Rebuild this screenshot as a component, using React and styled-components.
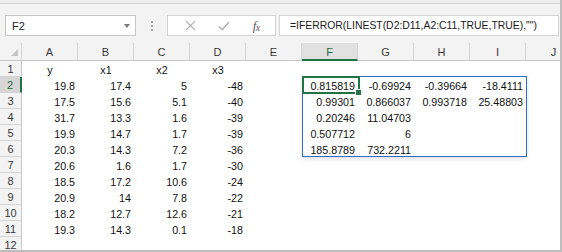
import React from 'react';
import styled, {createGlobalStyle} from 'styled-components';

const GlobalStyle = createGlobalStyle`
    html, body {
        margin: 0;
        padding: 0;
        background: #ffffff;
    }
`;

const COL_W = 56;
const ROW_H = 16;
const HEAD_H = 18;
const ROWHEAD_W = 22;

const columns = ['A', 'B', 'C', 'D', 'E', 'F', 'G', 'H', 'I', 'J'];

const data = [
    ['y', 'x1', 'x2', 'x3'],
    ['19.8', '17.4', '5', '-48', '', '0.815819', '-0.69924', '-0.39664', '-18.4111'],
    ['17.5', '15.6', '5.1', '-40', '', '0.99301', '0.866037', '0.993718', '25.48803'],
    ['31.7', '13.3', '1.6', '-39', '', '0.20246', '11.04703'],
    ['19.9', '14.7', '1.7', '-39', '', '0.507712', '6'],
    ['20.3', '14.3', '7.2', '-36', '', '185.8789', '732.2211'],
    ['20.6', '1.6', '1.7', '-30'],
    ['18.5', '17.2', '10.6', '-24'],
    ['20.9', '14', '7.8', '-22'],
    ['18.2', '12.7', '12.6', '-21'],
    ['19.3', '14.3', '0.1', '-18'],
    [],
];

const Window = styled.div`
    width: 562px;
    height: 252px;
    box-sizing: border-box;
    border-right: 2px solid #bdbdbd;
    border-bottom: 2px solid #bdbdbd;
    display: flex;
    flex-direction: column;
    overflow: hidden;
    font-family: "Liberation Sans", Arial, sans-serif;
    color: #1a1a1a;
`;

const TopStrip = styled.div`
    height: 3px;
    flex: none;
    background: #eeeeee;
    border-bottom: 1px solid #d4d4d4;
`;

const FormulaBar = styled.div`
    height: 39px;
    flex: none;
    background: #f3f3f3;
    display: flex;
    align-items: flex-start;
    padding: 11px 1px 0 5px;
    box-sizing: border-box;
`;

const NameBox = styled.div`
    width: 131px;
    height: 21px;
    box-sizing: border-box;
    background: #ffffff;
    border: 1px solid #c6c6c6;
    display: flex;
    align-items: center;
    justify-content: space-between;
    padding: 0 5px 0 6px;
    font-size: 11px;
    color: #222;
`;

const Caret = styled.span`
    width: 0;
    height: 0;
    border-left: 3.5px solid transparent;
    border-right: 3.5px solid transparent;
    border-top: 4px solid #7a7a7a;
`;

const Grip = styled.div`
    width: 31px;
    height: 21px;
    display: flex;
    flex-direction: column;
    align-items: center;
    justify-content: center;
    gap: 2px;
`;

const GripDot = styled.span`
    width: 2px;
    height: 2px;
    background: #a8a8a8;
`;

const FxButtons = styled.div`
    width: 109px;
    height: 21px;
    box-sizing: border-box;
    background: #ffffff;
    border: 1px solid #d4d4d4;
    display: flex;
    align-items: center;
    justify-content: space-around;
    padding: 0 4px 0 6px;
`;

const FxLabel = styled.span`
    font-family: "Liberation Serif", "Times New Roman", serif;
    font-style: italic;
    font-size: 13px;
    color: #5a5a5a;
    letter-spacing: -0.5px;

    small {
        font-size: 10px;
        position: relative;
        top: 1px;
    }
`;

const FormulaInput = styled.div`
    flex: 1;
    height: 21px;
    margin-left: 3px;
    box-sizing: border-box;
    background: #ffffff;
    border: 1px solid #d4d4d4;
    display: flex;
    align-items: center;
    padding-left: 10px;
    font-size: 10.4px;
    color: #1a1a1a;
    white-space: nowrap;
`;

const Sheet = styled.div`
    flex: 1;
    position: relative;
    display: grid;
    grid-template-columns: ${ROWHEAD_W}px repeat(${columns.length}, ${COL_W}px);
    grid-template-rows: ${HEAD_H}px repeat(${data.length}, ${ROW_H}px);
    background: #ffffff;
    overflow: hidden;
`;

const Corner = styled.div`
    background: #f3f3f3;
    border-right: 1px solid #d4d4d4;
    border-bottom: 1px solid #c8c8c8;
    position: relative;
`;

const CornerMark = styled.span`
    position: absolute;
    right: 3px;
    bottom: 4px;
    width: 0;
    height: 0;
    border-left: 7px solid transparent;
    border-bottom: 7px solid #c3c3c3;
`;

const ColHead = styled.div`
    background: ${(p) => (p.$active ? '#e1e1e1' : '#f3f3f3')};
    border-right: 1px solid #d4d4d4;
    border-bottom: ${(p) => (p.$active ? '2px solid #217346' : '1px solid #c8c8c8')};
    color: ${(p) => (p.$active ? '#1e6b40' : '#3a3a3a')};
    font-size: 11px;
    display: flex;
    align-items: center;
    justify-content: center;
    padding-top: 1px;
    box-sizing: border-box;
`;

const RowHead = styled.div`
    background: ${(p) => (p.$active ? '#d6d6d6' : '#f3f3f3')};
    border-right: ${(p) => (p.$active ? '2px solid #217346' : '1px solid #c8c8c8')};
    border-bottom: 1px solid #d4d4d4;
    color: ${(p) => (p.$active ? '#1e6b40' : '#3a3a3a')};
    font-size: 11px;
    display: flex;
    align-items: center;
    justify-content: center;
    box-sizing: border-box;
`;

const Cell = styled.div`
    font-size: 10.7px;
    line-height: ${ROW_H}px;
    padding: 1px 3px 0;
    white-space: nowrap;
    overflow: visible;
    text-align: ${(p) => (p.$label ? 'center' : 'right')};
    color: #111;
`;

const ResultRange = styled.div`
    position: absolute;
    left: ${ROWHEAD_W + COL_W * 5}px;
    top: ${HEAD_H + ROW_H - 1}px;
    width: ${COL_W * 4 + 1}px;
    height: ${ROW_H * 5 + 1}px;
    box-sizing: border-box;
    border: 1px solid #2f6cc7;
    box-shadow: 0 2px 4px rgba(0, 0, 0, 0.12);
    pointer-events: none;
`;

const ActiveCell = styled.div`
    position: absolute;
    left: ${ROWHEAD_W + COL_W * 5}px;
    top: ${HEAD_H + ROW_H - 1}px;
    width: ${COL_W + 2}px;
    height: ${ROW_H + 2}px;
    box-sizing: border-box;
    border: 2px solid #217346;
    pointer-events: none;
`;

const FillHandle = styled.span`
    position: absolute;
    right: -4px;
    bottom: -4px;
    width: 5px;
    height: 5px;
    background: #217346;
    border: 1px solid #ffffff;
`;

const CrossIcon = () => (
    <svg width='11' height='11' viewBox='0 0 11 11'>
        <path d='M1 1 L10 10 M10 1 L1 10' stroke='#b4b4b4' strokeWidth='1.2' fill='none'/>
    </svg>
);

const CheckIcon = () => (
    <svg width='12' height='10' viewBox='0 0 12 10'>
        <path d='M1 5.5 L4.2 8.5 L11 1' stroke='#b4b4b4' strokeWidth='1.6' fill='none'/>
    </svg>
);

const App = () => {
    return (
        <Window>
            <GlobalStyle/>
            <TopStrip/>
            <FormulaBar>
                <NameBox>
                    <span>{'F2'}</span>
                    <Caret/>
                </NameBox>
                <Grip>
                    <GripDot/>
                    <GripDot/>
                    <GripDot/>
                </Grip>
                <FxButtons>
                    <CrossIcon/>
                    <CheckIcon/>
                    <FxLabel>{'f'}<small>{'x'}</small></FxLabel>
                </FxButtons>
                <FormulaInput>{'=IFERROR(LINEST(D2:D11,A2:C11,TRUE,TRUE),"")'}</FormulaInput>
            </FormulaBar>
            <Sheet>
                <Corner><CornerMark/></Corner>
                {columns.map((c) => (
                    <ColHead key={c} $active={c === 'F'}>{c}</ColHead>
                ))}
                {data.map((row, r) => (
                    <React.Fragment key={r}>
                        <RowHead $active={r === 1}>{r + 1}</RowHead>
                        {columns.map((c, i) => (
                            <Cell key={c} $label={r === 0}>{row[i] || ''}</Cell>
                        ))}
                    </React.Fragment>
                ))}
                <ResultRange/>
                <ActiveCell><FillHandle/></ActiveCell>
            </Sheet>
        </Window>
    );
};

export default App;
